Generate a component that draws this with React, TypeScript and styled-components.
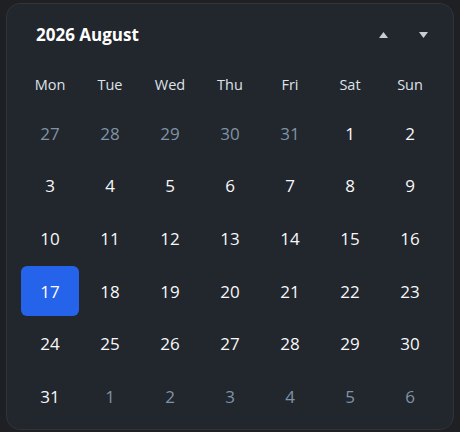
import React from 'react';
import styled, { createGlobalStyle } from 'styled-components';

const GlobalStyle = createGlobalStyle`
  html, body {
    margin: 0;
    padding: 0;
    background: #1f2023;
    font-family: "Open Sans", "Noto Sans", sans-serif;
  }
`;

const Card = styled.div`
  box-sizing: border-box;
  width: 448px;
  height: 427px;
  margin: 3px 0 0 6px;
  padding: 0 14px;
  background: #22262d;
  border: 1px solid #30343b;
  border-radius: 14px;
  color: #f5f7fa;
`;

const Header = styled.div`
  height: 61px;
  display: flex;
  align-items: center;
  justify-content: space-between;
  padding-left: 15px;
`;

const Title = styled.div`
  font-size: 17px;
  font-weight: 700;
  color: #ffffff;
`;

const NavGroup = styled.div`
  display: flex;
  gap: 8px;
`;

const NavButton = styled.button`
  width: 32px;
  height: 32px;
  display: flex;
  align-items: center;
  justify-content: center;
  padding: 0;
  background: transparent;
  border: none;
  border-radius: 6px;
  color: #c9ced6;
  cursor: pointer;
`;

const WeekRow = styled.div`
  display: grid;
  grid-template-columns: repeat(7, 58px);
  column-gap: 2px;
  height: 39px;
  align-items: center;
`;

const WeekDay = styled.div`
  text-align: center;
  font-size: 14.5px;
  color: #dfe3e9;
`;

const DayGrid = styled.div`
  display: grid;
  grid-template-columns: repeat(7, 58px);
  grid-auto-rows: 50px;
  column-gap: 2px;
  row-gap: 2.7px;
  margin-top: 4px;
`;

const Day = styled.div<{ $muted?: boolean; $selected?: boolean }>`
  display: flex;
  align-items: center;
  justify-content: center;
  font-size: 17px;
  border-radius: 6px;
  color: ${(p) => (p.$selected ? '#ffffff' : p.$muted ? '#7f93a6' : '#f7f8fa')};
  background: ${(p) => (p.$selected ? '#2563eb' : 'transparent')};
`;

const Triangle: React.FC<{ up?: boolean }> = ({ up }) => (
  <svg width="9" height="6" viewBox="0 0 9 6">
    <polygon points={up ? '4.5,0 9,6 0,6' : '0,0 9,0 4.5,6'} fill="currentColor" />
  </svg>
);

const weekDays = ['Mon', 'Tue', 'Wed', 'Thu', 'Fri', 'Sat', 'Sun'];

type Cell = { n: number; muted: boolean };

function buildDays(): Cell[] {
  const cells: Cell[] = [];
  for (let d = 27; d <= 31; d++) cells.push({ n: d, muted: true });
  for (let d = 1; d <= 31; d++) cells.push({ n: d, muted: false });
  for (let d = 1; d <= 6; d++) cells.push({ n: d, muted: true });
  return cells;
}

export default function App() {
  const days = buildDays();
  return (
    <>
      <GlobalStyle />
      <Card>
        <Header>
          <Title>2026 August</Title>
          <NavGroup>
            <NavButton aria-label="previous month">
              <Triangle up />
            </NavButton>
            <NavButton aria-label="next month">
              <Triangle />
            </NavButton>
          </NavGroup>
        </Header>
        <WeekRow>
          {weekDays.map((w) => (
            <WeekDay key={w}>{w}</WeekDay>
          ))}
        </WeekRow>
        <DayGrid>
          {days.map((c, i) => (
            <Day key={i} $muted={c.muted} $selected={!c.muted && c.n === 17}>
              {c.n}
            </Day>
          ))}
        </DayGrid>
      </Card>
    </>
  );
}
